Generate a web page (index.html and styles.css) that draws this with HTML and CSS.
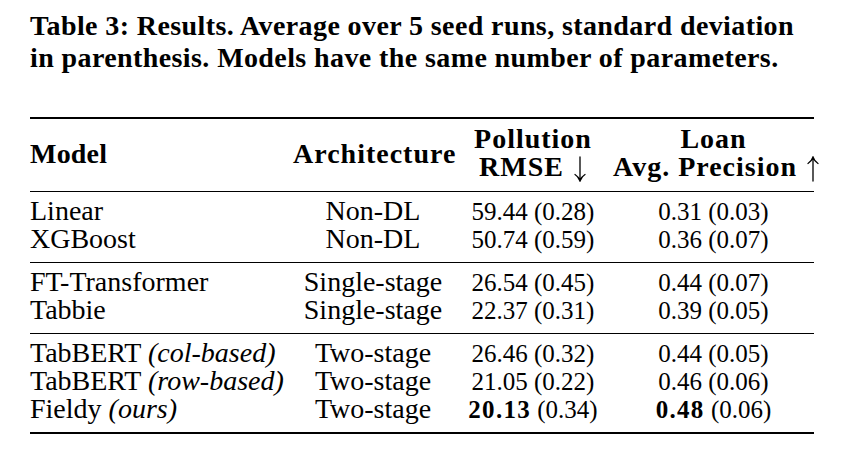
FILE: index.html
```html
<!DOCTYPE html>
<html>
<head>
<meta charset="utf-8">
<link rel="stylesheet" href="styles.css">
</head>
<body>
<div class="page">
  <p class="caption">Table 3: Results. Average over 5 seed runs, standard deviation<br>in parenthesis. Models have the same number of parameters.</p>
  <table class="results">
    <colgroup>
      <col class="c-model">
      <col class="c-arch">
      <col class="c-poll">
      <col class="c-loan">
    </colgroup>
    <thead>
      <tr>
        <th class="left model-head">Model</th>
        <th>Architecture</th>
        <th>Pollution<br>RMSE <svg class="arrow" viewBox="0 0 14 26" width="14" height="26"><path d="M7 1 V25 M2 18.5 Q5.5 20.5 7 25 Q8.5 20.5 12 18.5" fill="none" stroke="#000" stroke-width="1.3" stroke-linecap="round"/></svg></th>
        <th>Loan<br>Avg. Precision <svg class="arrow" viewBox="0 0 14 26" width="14" height="26"><path d="M7 25 V1 M2 7.5 Q5.5 5.5 7 1 Q8.5 5.5 12 7.5" fill="none" stroke="#000" stroke-width="1.3" stroke-linecap="round"/></svg></th>
      </tr>
    </thead>
    <tbody>
      <tr><td class="left">Linear</td><td>Non-DL</td><td><span class="num">59.44 (0.28)</span></td><td><span class="num">0.31 (0.03)</span></td></tr>
      <tr><td class="left">XGBoost</td><td>Non-DL</td><td><span class="num">50.74 (0.59)</span></td><td><span class="num">0.36 (0.07)</span></td></tr>
    </tbody>
    <tbody>
      <tr><td class="left">FT-Transformer</td><td>Single-stage</td><td><span class="num">26.54 (0.45)</span></td><td><span class="num">0.44 (0.07)</span></td></tr>
      <tr><td class="left">Tabbie</td><td>Single-stage</td><td><span class="num">22.37 (0.31)</span></td><td><span class="num">0.39 (0.05)</span></td></tr>
    </tbody>
    <tbody>
      <tr><td class="left">TabBERT <em>(col-based)</em></td><td>Two-stage</td><td><span class="num">26.46 (0.32)</span></td><td><span class="num">0.44 (0.05)</span></td></tr>
      <tr><td class="left">TabBERT <em>(row-based)</em></td><td>Two-stage</td><td><span class="num">21.05 (0.22)</span></td><td><span class="num">0.46 (0.06)</span></td></tr>
      <tr><td class="left">Fieldy <em>(ours)</em></td><td>Two-stage</td><td><span class="num"><strong>20.13</strong> (0.34)</span></td><td><span class="num"><strong>0.48</strong> (0.06)</span></td></tr>
    </tbody>
  </table>
</div>
</body>
</html>
```
FILE: styles.css
```css
html, body {
  margin: 0;
  padding: 0;
  background: #ffffff;
}
.page {
  padding: 10px 0 0 30px;
  font-family: "Liberation Serif", "DejaVu Serif", serif;
  color: #000;
}
.caption {
  margin: 0;
  white-space: nowrap;
  font-weight: bold;
  font-size: 28px;
  line-height: 32px;
  letter-spacing: 0.4px;
}
.results {
  margin-top: 43px;
  width: 784px;
  border-collapse: collapse;
  table-layout: fixed;
  font-size: 28px;
  line-height: 28px;
  border-top: 2px solid #000;
  border-bottom: 2px solid #000;
}
.c-model { width: 263px; }
.c-arch { width: 160px; }
.c-poll { width: 160px; }
.c-loan { width: 201px; }
.results th, .results td {
  padding: 0;
  text-align: center;
  white-space: nowrap;
}
.results th {
  padding: 6px 0 9px 0;
  font-weight: bold;
  letter-spacing: 1px;
  vertical-align: middle;
}
.results th.model-head { letter-spacing: 0.2px; }
.results td { vertical-align: baseline; }
.results th.left, .results td.left { text-align: left; }
.results tbody { border-top: 1px solid #000; }
.results tbody tr:first-child td { padding-top: 5px; }
.results tbody tr:last-child td { padding-bottom: 9px; }
.arrow {
  display: inline-block;
  vertical-align: -6px;
  margin-left: 1px;
}
.num {
  font-size: 25px;
  line-height: 20px;
}
.num strong {
  font-weight: bold;
  letter-spacing: 1.3px;
}
em { font-style: italic; }
```
